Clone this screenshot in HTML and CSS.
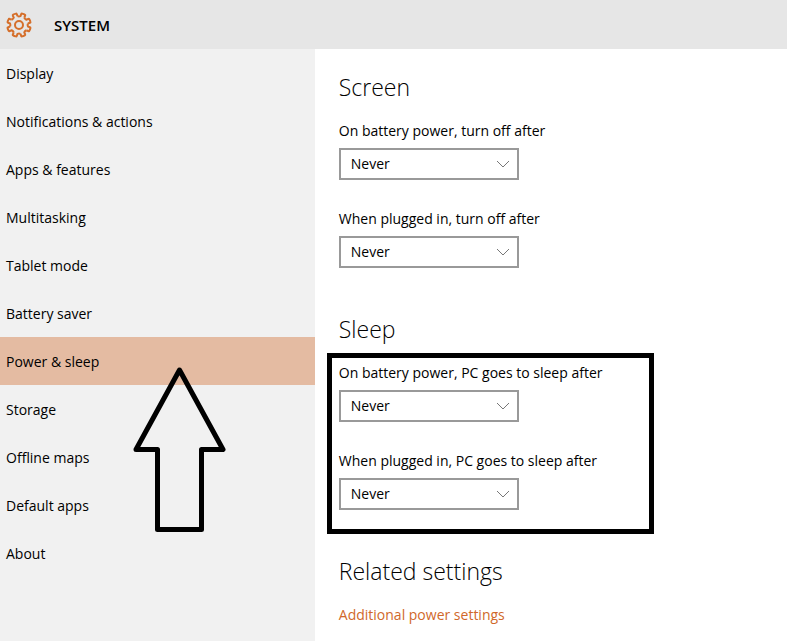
FILE: index.html
```html
<!DOCTYPE html>
<html lang="en">
<head>
<meta charset="utf-8">
<meta name="viewport" content="width=device-width, initial-scale=1">
<title>System settings</title>
<link rel="stylesheet" href="styles.css">
</head>
<body>
<header class="topbar">
  <svg class="gear" viewBox="-13 -13 26 26" aria-hidden="true">
    <defs><path id="tooth" d="M8.9 -1.5Q8.3 0 8.9 1.5L10.9 2.2Q11.6 2.5 11.4 3.2Q10.9 4.9 10.3 5.8Q10 6.5 9.2 6.1L7.35 5.23"/></defs>
    <use href="#tooth"/>
    <use href="#tooth" transform="rotate(45)"/>
    <use href="#tooth" transform="rotate(90)"/>
    <use href="#tooth" transform="rotate(135)"/>
    <use href="#tooth" transform="rotate(180)"/>
    <use href="#tooth" transform="rotate(225)"/>
    <use href="#tooth" transform="rotate(270)"/>
    <use href="#tooth" transform="rotate(315)"/>
    <circle r="4"/>
  </svg>
  <h1 class="title">SYSTEM</h1>
</header>
<div class="layout">
  <nav class="sidebar" aria-label="System">
    <a class="item" href="#display">Display</a>
    <a class="item" href="#notifications">Notifications &amp; actions</a>
    <a class="item" href="#apps">Apps &amp; features</a>
    <a class="item" href="#multitasking">Multitasking</a>
    <a class="item" href="#tablet">Tablet mode</a>
    <a class="item" href="#battery">Battery saver</a>
    <a class="item current" href="#power" aria-current="page">Power &amp; sleep</a>
    <a class="item" href="#storage">Storage</a>
    <a class="item" href="#maps">Offline maps</a>
    <a class="item" href="#defaults">Default apps</a>
    <a class="item" href="#about">About</a>
    <svg class="arrow" viewBox="0 0 94 166" aria-hidden="true">
      <path d="M46.500 4L90 83.500H68.500V163.500H24.500V83.500H3Z"/>
    </svg>
  </nav>
  <main class="content">
    <section class="section">
      <h2 class="heading">Screen</h2>
      <div class="fields">
        <div class="field">
          <label for="screen-battery">On battery power, turn off after</label>
          <div class="dropdown">
            <select id="screen-battery"><option>Never</option></select>
            <svg class="chevron" viewBox="0 0 14 8" aria-hidden="true"><path d="M1 1L7 7L13 1"/></svg>
          </div>
        </div>
        <div class="field">
          <label for="screen-plugged">When plugged in, turn off after</label>
          <div class="dropdown">
            <select id="screen-plugged"><option>Never</option></select>
            <svg class="chevron" viewBox="0 0 14 8" aria-hidden="true"><path d="M1 1L7 7L13 1"/></svg>
          </div>
        </div>
      </div>
    </section>
    <section class="section">
      <h2 class="heading">Sleep</h2>
      <div class="fields marked">
        <div class="field">
          <label for="sleep-battery">On battery power, PC goes to sleep after</label>
          <div class="dropdown">
            <select id="sleep-battery"><option>Never</option></select>
            <svg class="chevron" viewBox="0 0 14 8" aria-hidden="true"><path d="M1 1L7 7L13 1"/></svg>
          </div>
        </div>
        <div class="field">
          <label for="sleep-plugged">When plugged in, PC goes to sleep after</label>
          <div class="dropdown">
            <select id="sleep-plugged"><option>Never</option></select>
            <svg class="chevron" viewBox="0 0 14 8" aria-hidden="true"><path d="M1 1L7 7L13 1"/></svg>
          </div>
        </div>
      </div>
    </section>
    <section class="section">
      <h2 class="heading">Related settings</h2>
      <a class="link" href="#additional">Additional power settings</a>
    </section>
  </main>
</div>
</body>
</html>
```
FILE: styles.css
```css
*,
*::after {
  box-sizing: border-box;
}

body {
  margin: 0;
  min-height: 100vh;
  display: flex;
  flex-direction: column;
  background: #fff;
  color: #000;
  font: 14px/20px "Open Sans", "Noto Sans", sans-serif;
}

.topbar {
  display: flex;
  align-items: center;
  gap: 22px;
  height: 49px;
  padding: 0 6px;
  background: #e6e6e6;
}

.gear {
  width: 26px;
  height: 26px;
  fill: none;
  stroke: #d56f2b;
  stroke-width: 2;
  stroke-linejoin: round;
}

.title {
  margin: 0;
  font-size: 15px;
  font-weight: 600;
}

.layout {
  flex: 1;
  display: grid;
  grid-template-columns: 2fr 3fr;
}

.sidebar {
  position: relative;
  background: #f1f1f1;
}

.item {
  display: flex;
  align-items: center;
  height: 48px;
  padding: 2px 6px 0;
  color: inherit;
  text-decoration: none;
}

.current {
  background: #e4bba2;
}

/* Callout arrow lying over the menu */
.arrow {
  position: absolute;
  left: 133px;
  top: 317px;
  width: 94px;
  height: 166px;
  fill: none;
  stroke: #000;
  stroke-width: 5;
  stroke-linejoin: round;
  pointer-events: none;
}

.content {
  display: flex;
  flex-direction: column;
  gap: 45px;
  padding: 22px 24px 16px;
}

.heading {
  margin: 0 0 18px;
  font-size: 23px;
  line-height: 32px;
  font-weight: 300;
}

.fields {
  position: relative;
  display: flex;
  flex-direction: column;
  gap: 29px;
}

/* Callout frame lying around the group */
.marked::after {
  content: "";
  position: absolute;
  left: -12px;
  top: -10px;
  bottom: -24px;
  width: 327px;
  border: 5px solid #000;
  pointer-events: none;
}

.field {
  display: flex;
  flex-direction: column;
  gap: 7px;
}

.dropdown {
  position: relative;
  width: 180px;
}

.dropdown select {
  display: block;
  width: 100%;
  height: 32px;
  padding: 0 32px 0 10px;
  border: 2px solid #999;
  border-radius: 0;
  background: #fff;
  color: inherit;
  font: inherit;
  appearance: none;
}

.chevron {
  position: absolute;
  right: 9px;
  top: 12px;
  width: 14px;
  height: 8px;
  fill: none;
  stroke: #777;
  pointer-events: none;
}

.link {
  color: #d0682a;
  text-decoration: none;
}
```
